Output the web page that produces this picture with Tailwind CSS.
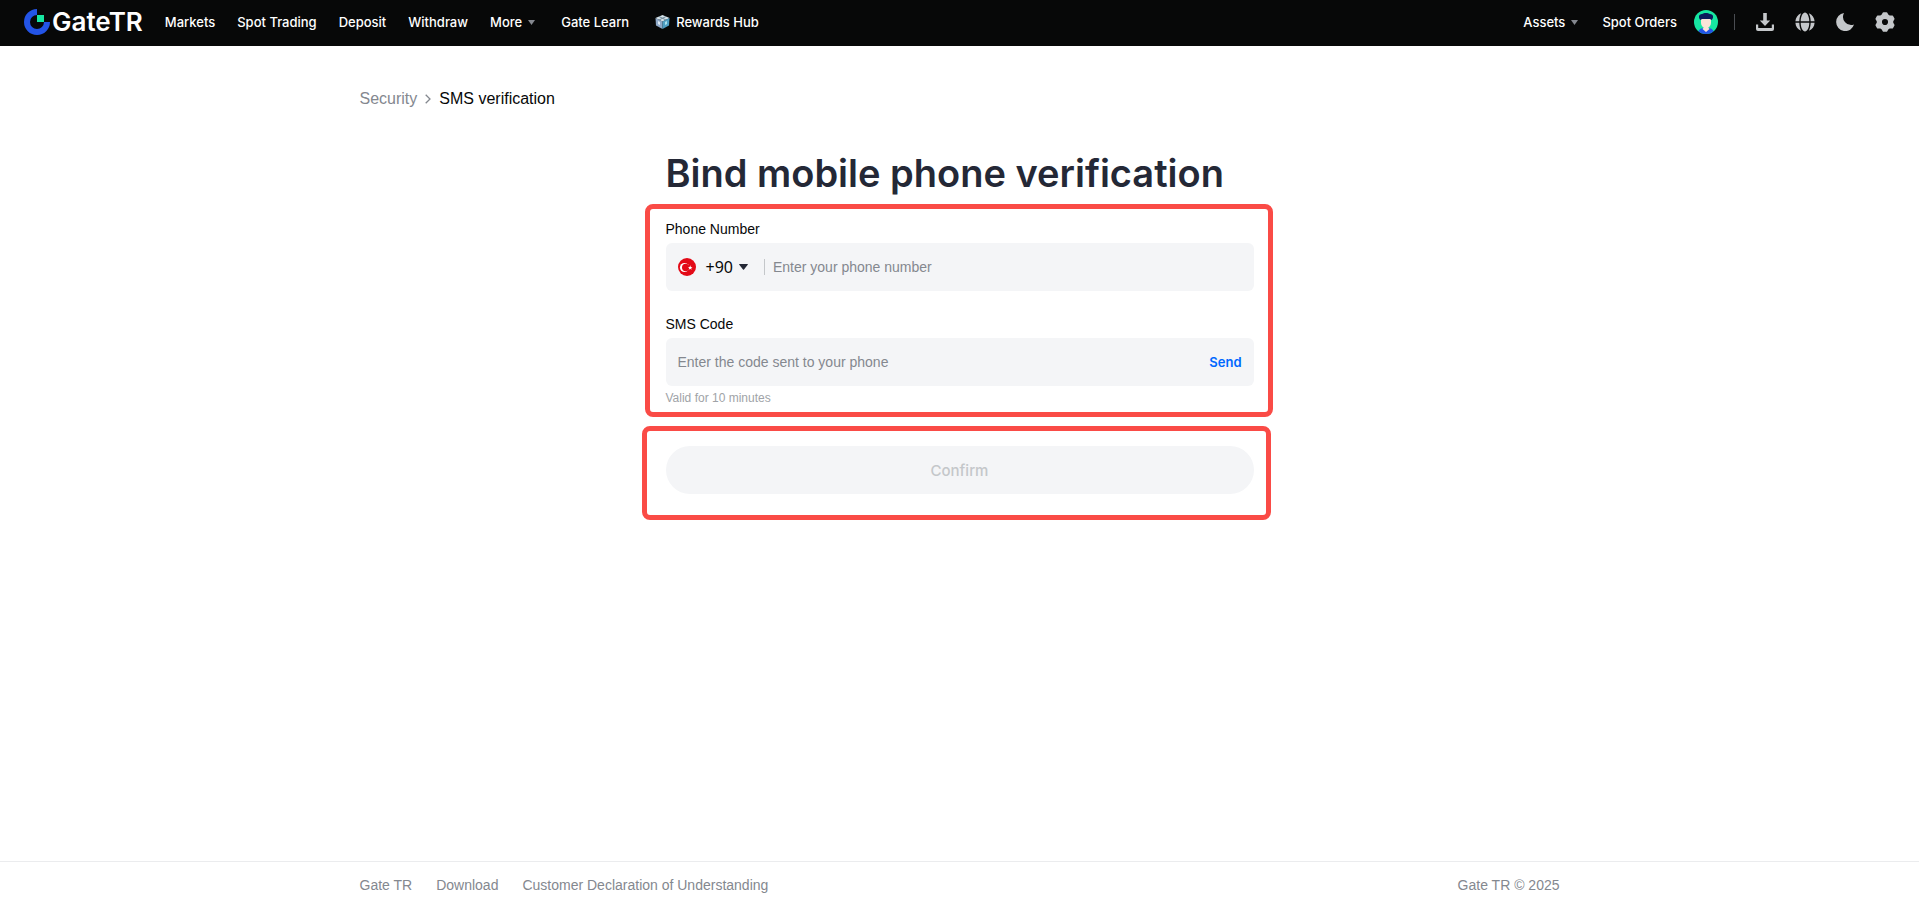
<!DOCTYPE html>
<html lang="en">
<head>
    <meta charset="UTF-8">
    <meta name="viewport" content="width=device-width, initial-scale=1.0">
    <title>SMS verification - Gate TR</title>
    <script src="https://cdn.jsdelivr.net/npm/@tailwindcss/browser@4"></script>
</head>
<body class="min-h-screen flex flex-col bg-white font-['Liberation_Sans',sans-serif] text-[#070808]">

    <!-- Top navigation -->
    <header class="h-[46px] shrink-0 bg-[#070808] text-white px-6 pb-0.5 flex items-center justify-between font-['Inter',sans-serif] text-[13px] leading-6 font-medium whitespace-nowrap">
        <div class="flex items-center">
            <a href="#" class="flex items-center gap-0.5 mr-[22px]" aria-label="Gate TR">
                <svg class="size-[26px]" viewBox="0 0 26 26" aria-hidden="true">
                    <path d="M13 0a13 13 0 1 0 13 13h-6a7 7 0 1 1-7-7z" fill="#2354e6"/>
                    <path d="M13 6h7v7h-7z" fill="#17e6a1"/>
                </svg>
                <span class="text-[26px] leading-6 font-semibold">GateTR</span>
            </a>
            <nav class="flex items-center gap-[22px]">
                <a href="#">Markets</a>
                <a href="#">Spot Trading</a>
                <a href="#">Deposit</a>
                <a href="#">Withdraw</a>
                <button type="button" class="flex items-center gap-1.5 mr-1">More
                    <svg class="w-[7px] h-[5px]" viewBox="0 0 7 5" fill="#84888f" aria-hidden="true"><path d="M0 0h7L3.500 5z"/></svg>
                </button>
                <a href="#">Gate Learn</a>
                <a href="#" class="flex items-center gap-1.5 ml-1">
                    <svg class="w-[15px] h-4" viewBox="0 0 15 16" aria-hidden="true">
                        <path d="M7.500 1L14.500 4 7.500 7.500.500 4z" fill="#d5e3ea"/>
                        <path d="M.5 4l7 3.500V15L1 11.500z" fill="#8fa9c8"/>
                        <path d="M14.500 4l-7 3.500V15L14 11.500z" fill="#4f9fc4"/>
                        <path d="M4 2.500l7 3.500M11 2.500L4 6" stroke="#6d8797" stroke-width="1"/>
                        <path d="M3 7l2 1v3L3 10z" fill="#dceaf5"/>
                        <path d="M12 7l-2 1v3l2-1z" fill="#a8e1ec"/>
                    </svg>
                    Rewards Hub
                </a>
            </nav>
        </div>

        <div class="flex items-center gap-[21px]">
            <div class="flex items-center gap-6">
                <button type="button" class="flex items-center gap-1.5">Assets
                    <svg class="w-[7px] h-[5px]" viewBox="0 0 7 5" fill="#84888f" aria-hidden="true"><path d="M0 0h7L3.500 5z"/></svg>
                </button>
                <a href="#">Spot Orders</a>
            </div>
            <div class="flex items-center gap-4">
                <button type="button" class="-ml-1" aria-label="Account">
                    <svg class="size-6 rounded-full" viewBox="0 0 24 24" aria-hidden="true">
                        <path d="M0 0h24v24H0z" fill="#17e6a1"/>
                        <path d="M4 24c0-4 2-5.500 5.500-6h5c3.500.500 5.500 2 5.500 6z" fill="#2354e6"/>
                        <path d="M7 8h10v4.500c0 2.500-1 4-2.800 5L15.500 19 12 22 8.500 19l1.300-1.500C8 16.500 7 15 7 12.500z" fill="#fbe4d8"/>
                        <path d="M6.500 10C4 8 4.500 4 8 4c2-1.500 6-1.500 8 0 3.500 0 4 4 1.500 6L16 9H8z" fill="#0b1a5c"/>
                    </svg>
                </button>
                <span class="w-px h-4 bg-[#4a4d52]"></span>
            </div>
            <button type="button" aria-label="Download">
                <svg class="w-[18px] h-[18px]" viewBox="0 0 18 18" fill="#c4c7ca" aria-hidden="true">
                    <path d="M7.200 0h3.600v7.500h3.400L9 13 3.800 7.500h3.400z"/>
                    <path d="M0 11.500h2.200V15h13.600v-3.500H18V16a2 2 0 0 1-2 2H2a2 2 0 0 1-2-2z"/>
                </svg>
            </button>
            <button type="button" aria-label="Language">
                <svg class="size-5" viewBox="0 0 20 20" fill="#c4c7ca" aria-hidden="true">
                    <path d="M10 .5c2.200 0 4.300 4 4.300 8.800H5.700C5.700 4.500 7.800.5 10 .5zM5.700 10.700h8.600c0 4.800-2.100 8.800-4.300 8.800s-4.300-4-4.300-8.800z"/>
                    <path d="M6.200 1.200C2.800 2.600.6 5.600.4 9.300h3.900c.1-3.200.8-6.100 1.900-8.100zM13.800 1.200c3.400 1.400 5.600 4.400 5.800 8.100h-3.900c-.1-3.200-.8-6.100-1.900-8.100zM.4 10.700c.2 3.700 2.400 6.700 5.800 8.100-1.100-2-1.800-4.900-1.900-8.100zM19.600 10.700c-.2 3.700-2.400 6.700-5.800 8.100 1.100-2 1.800-4.900 1.900-8.100z"/>
                </svg>
            </button>
            <button type="button" aria-label="Dark mode">
                <svg class="w-[18px] h-[18px]" viewBox="0 0 18 18" fill="#c4c7ca" aria-hidden="true">
                    <path d="M8 0a9.100 9.100 0 1 0 10 11.500A8.200 8.200 0 0 1 8 0z"/>
                </svg>
            </button>
            <button type="button" aria-label="Settings">
                <svg class="size-5" viewBox="0 0 20 20" fill="#c4c7ca" stroke="#c4c7ca" stroke-width="1.500" stroke-linejoin="round" aria-hidden="true">
                    <path fill-rule="evenodd" d="M8.500 1h3l1.300 2.200 1.900 1.100 2.600-.1 1.500 2.600L17.500 9v2l1.300 2.200-1.500 2.600-2.600-.1-1.900 1.100L11.500 19h-3l-1.300-2.200-1.900-1.100-2.600.1-1.500-2.600L2.500 11V9L1.200 6.800l1.500-2.600 2.600.1 1.900-1.100zM10 6.200a3.800 3.800 0 1 0 0 7.600 3.800 3.800 0 0 0 0-7.600z"/>
                </svg>
            </button>
        </div>
    </header>

    <main class="grow w-full max-w-[1200px] mx-auto pt-[41px]">
        <!-- Breadcrumb -->
        <nav class="flex items-center text-base leading-6" aria-label="Breadcrumb">
            <a href="#" class="text-[#84888f]">Security</a>
            <svg class="w-[6px] h-[10px] mx-2" viewBox="0 0 6 10" fill="none" stroke="#84888f" stroke-width="1.300" aria-hidden="true"><path d="M.7.700L5 5 .7 9.300"/></svg>
            <span>SMS verification</span>
        </nav>

        <form class="w-full max-w-[588px] mx-auto mt-[38px]">
            <h1 class="font-['Inter',sans-serif] text-[38px] leading-12 font-semibold text-[#242836] whitespace-nowrap">Bind mobile phone verification</h1>

            <section class="relative mt-[21px]">
                <label for="phone" class="block text-sm leading-[22px]">Phone Number</label>
                <div class="mt-[3px] h-12 px-3 flex items-center rounded-md bg-[#f4f5f7]">
                    <button type="button" class="flex items-center text-base font-['Noto_Sans',sans-serif]" aria-label="Country code">
                        <svg class="w-[18px] h-[18px] mr-2.5" viewBox="0 0 18 18" aria-hidden="true">
                            <circle cx="9" cy="9" r="9" fill="#e30a17"/>
                            <circle cx="6.500" cy="9.500" r="4.600" fill="#fff"/>
                            <circle cx="7.700" cy="9.500" r="3.700" fill="#e30a17"/>
                            <path d="M12.200 7.300l.6 1.600 1.700.1-1.300 1.100.4 1.700-1.400-1-1.400 1 .4-1.700-1.300-1.100 1.700-.1z" fill="#fff"/>
                        </svg>
                        +90
                        <svg class="w-[9px] h-[6px] ml-1.5" viewBox="0 0 9 6" fill="#242836" aria-hidden="true"><path d="M.5 0h8q.8 0 .2.700L5 5.500q-.5.500-1 0L.3.700Q-.3 0 .5 0z"/></svg>
                    </button>
                    <span class="w-px h-4 bg-[#c4c7ca] ml-4 mr-2"></span>
                    <input id="phone" type="tel" placeholder="Enter your phone number" class="grow min-w-0 h-full bg-transparent outline-none text-sm placeholder:text-[#84888f]">
                </div>

                <label for="code" class="block mt-[22px] text-sm leading-[22px]">SMS Code</label>
                <div class="mt-[3px] h-12 px-3 flex items-center rounded-md bg-[#f4f5f7]">
                    <input id="code" type="text" placeholder="Enter the code sent to your phone" class="grow min-w-0 h-full bg-transparent outline-none text-sm placeholder:text-[#84888f]">
                    <button type="button" class="h-full pt-0.5 font-['Inter',sans-serif] text-[13px] font-semibold text-[#0068ff]">Send</button>
                </div>
                <p class="mt-1 text-xs leading-4 text-[#a0a3a7]">Valid for 10 minutes</p>

                <div class="absolute -top-3.5 -bottom-[11px] -left-[21px] -right-[19px] border-[5px] border-[#fa4b46] rounded-lg pointer-events-none"></div>
            </section>

            <section class="relative mt-10">
                <button type="submit" disabled class="w-full h-12 pt-0.5 rounded-full bg-[#f4f5f7] font-['Inter',sans-serif] text-[15px] font-medium text-[#c4c7ca]">Confirm</button>

                <div class="absolute -top-5 -bottom-[26px] -left-6 -right-[17px] border-[5px] border-[#fa4b46] rounded-lg pointer-events-none"></div>
            </section>
        </form>
    </main>

    <footer class="border-t border-[#ebecee]">
        <div class="w-full max-w-[1200px] h-[45px] mx-auto flex items-center justify-between text-sm text-[#84888f]">
            <div class="flex gap-6">
                <a href="#">Gate TR</a>
                <a href="#">Download</a>
                <a href="#">Customer Declaration of Understanding</a>
            </div>
            <span>Gate TR © 2025</span>
        </div>
    </footer>

</body>
</html>
